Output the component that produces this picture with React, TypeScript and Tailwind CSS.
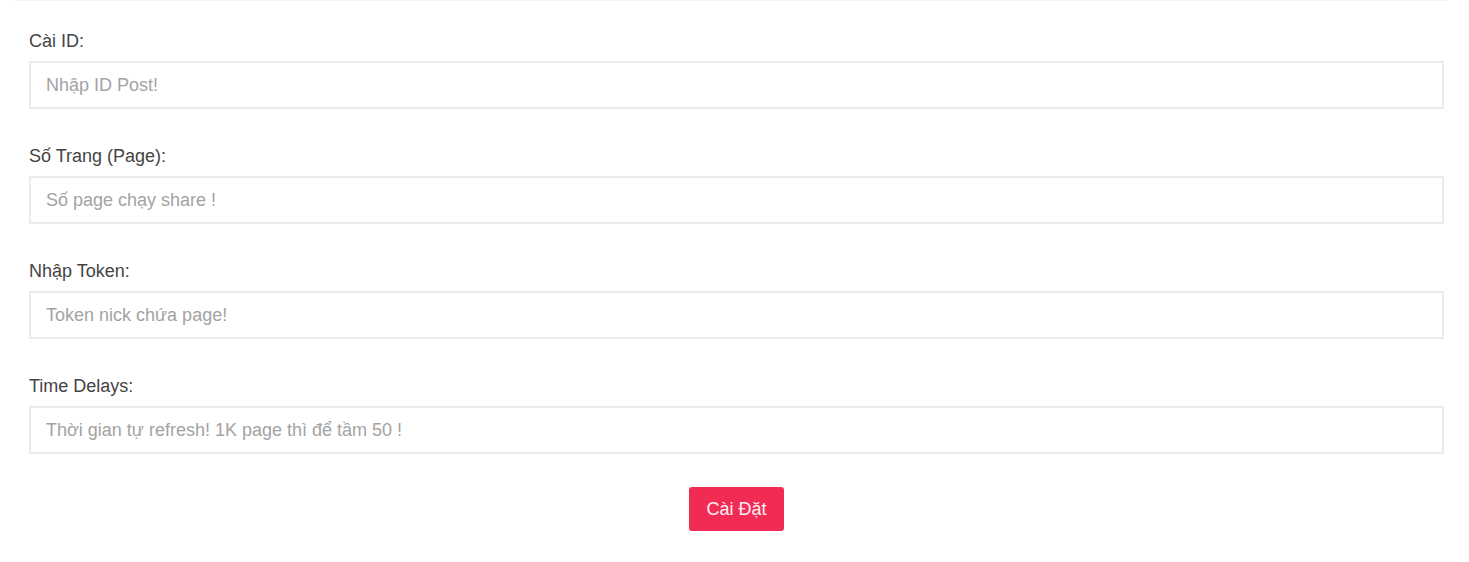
import React from "react";

const fields = [
  { label: "Cài ID:", placeholder: "Nhập ID Post!" },
  { label: "Số Trang (Page):", placeholder: "Số page chạy share !" },
  { label: "Nhập Token:", placeholder: "Token nick chứa page!" },
  { label: "Time Delays:", placeholder: "Thời gian tự refresh! 1K page thì để tầm 50 !" },
];

export default function App() {
  return (
    <div className="w-[1469px] h-[562px] bg-white" style={{ fontFamily: '"Liberation Sans", Arial, sans-serif' }}>
      <div className="ml-[15px] mr-[22px] border-t border-[#f4f4f4] pt-[29px]">
        <div className="pl-[14px] pr-[3px]">
          <div className="flex flex-col gap-[36px]">
            {fields.map((f) => (
              <div key={f.label}>
                <label className="block text-[18px] leading-[22px] text-[#444] mb-[9px]">{f.label}</label>
                <input
                  className="block w-full h-[48px] border-2 border-[#ebebeb] px-[15px] text-[18px] text-[#333] placeholder:text-[#a3a3a3] outline-none"
                  placeholder={f.placeholder}
                />
              </div>
            ))}
          </div>
          <div className="flex justify-center mt-[33px]">
            <button className="w-[95px] h-[44px] rounded-[3px] bg-[#f12b54] text-[#fdf0f3] text-[18px]">Cài Đặt</button>
          </div>
        </div>
      </div>
    </div>
  );
}
